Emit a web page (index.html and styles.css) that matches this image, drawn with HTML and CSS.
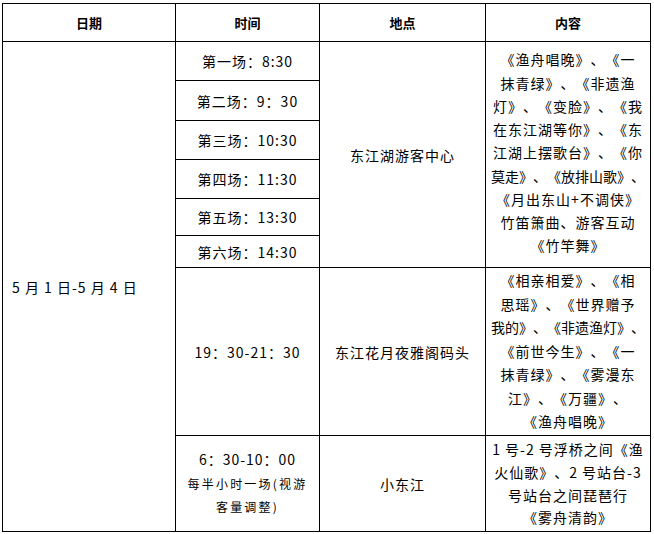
FILE: index.html
```html
<!DOCTYPE html>
<html lang="zh-CN">
<head>
<meta charset="utf-8">
<title>演出时间表</title>
<link rel="stylesheet" href="styles.css">
</head>
<body>
<div class="sheet">
  <div class="cell head">日期</div>
  <div class="cell head">时间</div>
  <div class="cell head">地点</div>
  <div class="cell head">内容</div>

  <div class="cell date">5 月 1 日-5 月 4 日</div>

  <div class="cell time">第一场：8:30</div>
  <div class="cell place place-1">东江湖游客中心</div>
  <div class="cell content content-1">
    <span class="ln">《渔舟唱晚》、《一</span>
    <span class="ln">抹青绿》、《非遗渔</span>
    <span class="ln">灯》、《变脸》、《我</span>
    <span class="ln">在东江湖等你》、《东</span>
    <span class="ln">江湖上摆歌台》、《你</span>
    <span class="ln tight">莫走》、《放排山歌》、</span>
    <span class="ln">《月出东山+不调侠》</span>
    <span class="ln">竹笛箫曲、游客互动</span>
    <span class="ln">《竹竿舞》</span>
  </div>
  <div class="cell time">第二场：9：30</div>
  <div class="cell time">第三场：10:30</div>
  <div class="cell time">第四场：11:30</div>
  <div class="cell time">第五场：13:30</div>
  <div class="cell time">第六场：14:30</div>

  <div class="cell time">19：30-21：30</div>
  <div class="cell place">东江花月夜雅阁码头</div>
  <div class="cell content content-2">
    <span class="ln">《相亲相爱》、《相</span>
    <span class="ln">思瑶》、《世界赠予</span>
    <span class="ln tight">我的》、《非遗渔灯》、</span>
    <span class="ln">《前世今生》、《一</span>
    <span class="ln">抹青绿》、《雾漫东</span>
    <span class="ln">江》、《万疆》、</span>
    <span class="ln">《渔舟唱晚》</span>
  </div>

  <div class="cell time time-multi">
    <span class="ln">6：30-10：00</span>
    <span class="ln small">每半小时一场(视游</span>
    <span class="ln small">客量调整)</span>
  </div>
  <div class="cell place">小东江</div>
  <div class="cell content content-3">
    <span class="ln">1 号-2 号浮桥之间《渔</span>
    <span class="ln">火仙歌》、2 号站台-3</span>
    <span class="ln">号站台之间琵琶行</span>
    <span class="ln">《雾舟清韵》</span>
  </div>
</div>
</body>
</html>
```

FILE: styles.css
```css
html, body {
  margin: 0;
  padding: 0;
  background: #fff;
}

body {
  font-family: "Noto Sans CJK SC", "Noto Sans", sans-serif;
  font-size: 14px;
  color: #000;
  text-spacing-trim: space-all;
}

.sheet {
  display: grid;
  grid-template-columns: 172px 143px 165px 164px;
  grid-template-rows: 37px 38px 39px 38px 38px 36px 31px 167px 95px;
  gap: 1px;
  padding: 1px;
  background: #000;
  margin: 3px 0 0 2px;
  width: max-content;
}

.cell {
  background: #fff;
  display: flex;
  align-items: center;
  justify-content: center;
  text-align: center;
  letter-spacing: 1px;
  white-space: nowrap;
  overflow: hidden;
}

.head {
  font-weight: 700;
  font-size: 13px;
  letter-spacing: 0;
}

.date {
  grid-column: 1;
  grid-row: 2 / span 8;
  justify-content: flex-start;
  padding-left: 9px;
  letter-spacing: 1px;
}

.time {
  grid-column: 2;
}

.place {
  grid-column: 3;
}

.place-1 {
  grid-row: 2 / span 6;
}

.content {
  grid-column: 4;
  flex-direction: column;
  line-height: 23px;
}

.content-1 {
  grid-row: 2 / span 6;
  line-height: 23.25px;
  padding-bottom: 3px;
}

.content-2 {
  line-height: 23.6px;
}

.content-3 {
  line-height: 22.7px;
}

.ln {
  display: block;
}

.tight {
  letter-spacing: 0;
}

.time-multi {
  flex-direction: column;
  line-height: 23.5px;
}

.small {
  font-size: 12px;
  letter-spacing: 2.2px;
}
```
